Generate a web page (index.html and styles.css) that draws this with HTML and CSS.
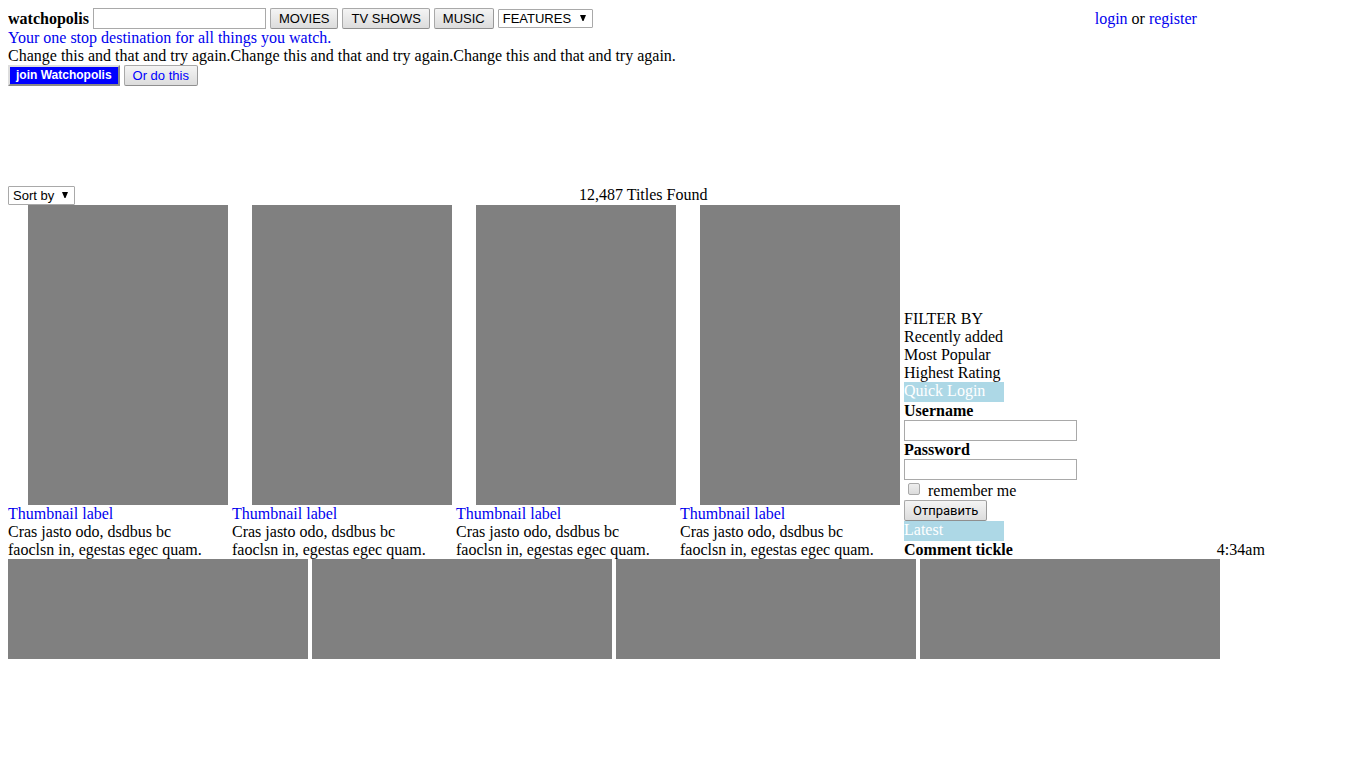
FILE: index.html
```html
<!DOCTYPE html>
<html lang="en">
<head>
<meta charset="utf-8">
<title>watchopolis</title>
<link rel="stylesheet" href="styles.css">
</head>
<body>
<header class="topbar">
  <strong>watchopolis</strong>
  <input class="field" type="text" aria-label="Search">
  <button class="btn" type="button">MOVIES</button>
  <button class="btn" type="button">TV SHOWS</button>
  <button class="btn" type="button">MUSIC</button>
  <span class="picker">
    <select class="select select-features" aria-label="Features"><option>FEATURES</option></select>
    <svg class="arrow" viewBox="0 0 8 7" aria-hidden="true"><path d="M1 0H7L4.500 6H3.500Z"/></svg>
  </span>
  <span class="account"><a href="#login">login</a> or <a href="#register">register</a></span>
</header>
<section class="intro">
  <a class="tagline" href="#about">Your one stop destination for all things you watch.</a>
  <p>Change this and that and try again.Change this and that and try again.Change this and that and try again.</p>
  <div class="actions">
    <button class="btn btn-join" type="button">join Watchopolis</button>
    <button class="btn btn-alt" type="button">Or do this</button>
  </div>
</section>
<div class="sortbar">
  <span class="picker">
    <select class="select select-sort" aria-label="Sort by"><option>Sort by</option></select>
    <svg class="arrow" viewBox="0 0 8 7" aria-hidden="true"><path d="M1 0H7L4.500 6H3.500Z"/></svg>
  </span>
  <span class="count">12,487 Titles Found</span>
</div>
<main class="catalog">
  <article class="card">
    <div class="poster"></div>
    <a href="#title-1">Thumbnail label</a>
    <p>Cras jasto odo, dsdbus bc<br>faoclsn in, egestas egec quam.</p>
  </article>
  <article class="card">
    <div class="poster"></div>
    <a href="#title-2">Thumbnail label</a>
    <p>Cras jasto odo, dsdbus bc<br>faoclsn in, egestas egec quam.</p>
  </article>
  <article class="card">
    <div class="poster"></div>
    <a href="#title-3">Thumbnail label</a>
    <p>Cras jasto odo, dsdbus bc<br>faoclsn in, egestas egec quam.</p>
  </article>
  <article class="card">
    <div class="poster"></div>
    <a href="#title-4">Thumbnail label</a>
    <p>Cras jasto odo, dsdbus bc<br>faoclsn in, egestas egec quam.</p>
  </article>
  <aside class="sidebar">
    <div>FILTER BY</div>
    <div>Recently added</div>
    <div>Most Popular</div>
    <div>Highest Rating</div>
    <div class="heading">Quick Login</div>
    <form class="login">
      <label class="label" for="username">Username</label>
      <input class="field" id="username" type="text">
      <label class="label" for="password">Password</label>
      <input class="field" id="password" type="password">
      <div class="remember">
        <input class="check" id="remember" type="checkbox">
        <label for="remember">remember me</label>
      </div>
      <button class="btn btn-submit" type="submit">Отправить</button>
    </form>
    <div class="heading">Latest</div>
    <div class="comment"><strong>Comment tickle</strong><span>4:34am</span></div>
  </aside>
</main>
<footer class="strip">
  <div class="tile"></div>
  <div class="tile"></div>
  <div class="tile"></div>
  <div class="tile"></div>
</footer>
</body>
</html>
```
FILE: styles.css
```css
* {
  box-sizing: border-box;
}

body {
  margin: 8px;
  background: #fff;
  color: #000;
  font: 16px/18px "Liberation Serif", "Times New Roman", serif;
}

p {
  margin: 0;
}

a {
  color: #0000ee;
  text-decoration: none;
}

.topbar {
  display: flex;
  align-items: center;
  gap: 4px;
}

.account {
  margin-left: 498px;
}

.field {
  width: 173px;
  height: 21px;
  margin: 0;
  padding: 1px 2px;
  border: 1px solid #a9a9a9;
  background: #fff;
  font: 13px "Liberation Sans", Arial, sans-serif;
}

.btn {
  height: 21px;
  margin: 0;
  padding: 0 8px;
  border: 1px solid;
  border-color: #a9a9a9 #999 #8f8f8f #a9a9a9;
  border-radius: 2px;
  background: linear-gradient(#f4f4f4, #dcdcdc);
  color: #000;
  font: 13px/17px "Liberation Sans", Arial, sans-serif;
  white-space: nowrap;
}

.btn-join {
  padding: 0 6px;
  border: 2px outset #ddd;
  border-radius: 0;
  background: #0000ff;
  color: #fff;
  font-size: 12px;
  font-weight: bold;
}

.btn-alt {
  color: #0000ff;
}

.btn-submit {
  font-family: Roboto, sans-serif;
}

.picker {
  display: flex;
  position: relative;
}

.select {
  height: 19px;
  margin: 0;
  padding: 0 4px;
  appearance: none;
  border: 1px solid #a9a9a9;
  border-radius: 1px;
  background: #fff;
  color: #000;
  font: 13px/17px "Liberation Sans", Arial, sans-serif;
}

.select-features {
  width: 95px;
}

.select-sort {
  width: 67px;
}

.arrow {
  position: absolute;
  top: 6px;
  right: 6px;
  width: 8px;
  height: 7px;
  pointer-events: none;
}

.intro {
  margin-bottom: 100px;
}

.tagline {
  display: table;
}

.actions {
  display: flex;
  gap: 4px;
}

.sortbar {
  display: flex;
  align-items: flex-start;
}

.count {
  margin-left: 504px;
}

.catalog {
  display: flex;
  align-items: flex-end;
  gap: 4px;
}

.card {
  flex: 0 0 220px;
}

.poster {
  height: 300px;
  margin-left: 20px;
  background: #808080;
}

.sidebar {
  flex: 1;
}

.heading {
  width: 100px;
  height: 20px;
  background: #add8e6;
  color: #fff;
}

.login {
  display: flex;
  flex-direction: column;
  align-items: flex-start;
}

.label {
  font-weight: bold;
}

.remember {
  display: flex;
  gap: 8px;
  padding: 2px 0 0 4px;
}

.check {
  width: 12px;
  height: 12px;
  margin: 1px 0 0;
  appearance: none;
  border: 1px solid #a9a9a9;
  border-radius: 2px;
  background: linear-gradient(#eee, #dcdcdc);
}

.comment {
  display: flex;
  gap: 204px;
}

.strip {
  display: flex;
  gap: 4px;
}

.tile {
  width: 300px;
  height: 100px;
  background: #808080;
}
```
